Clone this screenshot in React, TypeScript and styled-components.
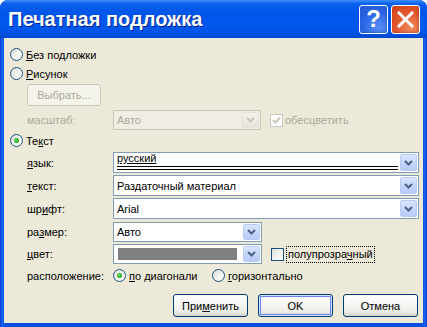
import styled, { createGlobalStyle } from 'styled-components';

const GlobalStyle = createGlobalStyle`
  html, body {
    margin: 0;
    padding: 0;
    background: #ffffff;
  }
  body {
    font-family: Tahoma, "Liberation Sans", Arial, sans-serif;
    font-size: 11px;
    color: #000000;
  }
`;

const Window = styled.div`
  width: 427px;
  height: 327px;
  display: flex;
  flex-direction: column;
  background: linear-gradient(90deg, #0831d9 0px, #166aee 2px, #0a4fe0 4px, #0a4fe0 423px, #166aee 425px, #0831d9 427px);
  border-radius: 8px 8px 0 0;
  overflow: hidden;
`;

const TitleBar = styled.div`
  height: 38px;
  flex: none;
  display: flex;
  align-items: center;
  padding: 0 7px 0 8px;
  background: linear-gradient(180deg, #3d8ef8 0px, #0a5fef 4px, #0055ea 14px, #0058ee 26px, #0052e2 34px, #0046cc 38px);
`;

const Title = styled.div`
  flex: 1;
  font-family: "Liberation Sans", Arial, sans-serif;
  font-weight: bold;
  font-size: 20px;
  color: #ffffff;
  text-shadow: 1px 1px 0 #0a1e8c;
  padding-top: 1px;
`;

const CaptionButton = styled.div<{ $kind: 'help' | 'close' }>`
  width: 29px;
  height: 29px;
  box-sizing: border-box;
  border: 1px solid #ffffff;
  border-radius: 3px;
  margin-left: 3px;
  display: flex;
  align-items: center;
  justify-content: center;
  background: ${(p) =>
    p.$kind === 'help'
      ? 'radial-gradient(circle at 70% 80%, #5a8ef6 0%, #2a66e4 55%, #2457d8 100%)'
      : 'radial-gradient(circle at 70% 80%, #f08a5c 0%, #e0552a 55%, #cc4218 100%)'};
  box-shadow: inset -1px -1px 2px rgba(0, 0, 0, 0.2);
  color: #ffffff;
  font-family: "Liberation Sans", Arial, sans-serif;
  font-weight: bold;
  font-size: 24px;
  line-height: 1;
`;

const Body = styled.div`
  flex: 1;
  margin: 0 4px 4px 4px;
  background: #ece9d8;
  display: flex;
  flex-direction: column;
  padding-top: 7px;
`;

const RadioRow = styled.div<{ $mt?: number }>`
  height: 19px;
  display: flex;
  align-items: center;
  gap: 3px;
  padding-left: 6px;
  margin-top: ${(p) => p.$mt ?? 0}px;
`;

const RadioCircle = styled.span<{ $checked?: boolean }>`
  width: 13px;
  height: 13px;
  box-sizing: border-box;
  border-radius: 50%;
  border: 1px solid #1c5180;
  background: linear-gradient(135deg, #dcdcd7 0%, #f4f4f0 60%, #ffffff 100%);
  display: flex;
  align-items: center;
  justify-content: center;
  flex: none;

  &::after {
    content: '';
    display: ${(p) => (p.$checked ? 'block' : 'none')};
    width: 5px;
    height: 5px;
    border-radius: 50%;
    background: radial-gradient(circle at 40% 40%, #6fe56b 0%, #2fb12b 50%, #1a8a18 100%);
  }
`;

const Mn = styled.span`
  text-decoration: underline;
`;

const FieldRow = styled.div<{ $h: number; $mt?: number }>`
  height: ${(p) => p.$h}px;
  margin-top: ${(p) => p.$mt ?? 0}px;
  display: grid;
  grid-template-columns: 86px auto auto 1fr;
  align-items: center;
  padding-left: 23px;
  padding-right: 5px;
`;

const Label = styled.div<{ $disabled?: boolean }>`
  color: ${(p) => (p.$disabled ? '#aca899' : '#000000')};
  white-space: nowrap;
`;

const Combo = styled.div<{ $w: number; $h: number; $disabled?: boolean }>`
  width: ${(p) => p.$w}px;
  height: ${(p) => p.$h}px;
  box-sizing: border-box;
  border: 1px solid ${(p) => (p.$disabled ? '#c9c7ba' : '#7f9db9')};
  background: ${(p) => (p.$disabled ? '#f0eee4' : '#ffffff')};
  color: ${(p) => (p.$disabled ? '#aca899' : '#000000')};
  display: flex;
  align-items: center;
  padding: 1px;
  gap: 2px;
`;

const ComboText = styled.div`
  flex: 1;
  padding-left: 2px;
  white-space: nowrap;
  overflow: hidden;
`;

const EditText = styled.div`
  flex: 1;
  align-self: flex-end;
  margin: 0 0 1px 2px;
  padding-bottom: 1px;
  border-bottom: 4px double #000000;
  line-height: 13px;
`;

const Swatch = styled.div`
  flex: 1;
  align-self: stretch;
  margin: 2px 4px 2px 3px;
  background: #808080;
`;

const ArrowButton = styled.div<{ $disabled?: boolean }>`
  width: 17px;
  align-self: stretch;
  box-sizing: border-box;
  border-radius: 2px;
  border: 1px solid ${(p) => (p.$disabled ? '#e6e4da' : '#b7cbf6')};
  background: ${(p) =>
    p.$disabled
      ? 'linear-gradient(180deg, #f3f2ec, #e6e4dc)'
      : 'linear-gradient(180deg, #dbe6fe 0%, #c6d7fc 50%, #b6cbf9 100%)'};
  display: flex;
  align-items: center;
  justify-content: center;
  flex: none;
`;

const CheckBox = styled.span<{ $disabled?: boolean }>`
  width: 13px;
  height: 13px;
  box-sizing: border-box;
  border: 1px solid ${(p) => (p.$disabled ? '#cac8bb' : '#1c5180')};
  background: ${(p) =>
    p.$disabled ? '#ffffff' : 'linear-gradient(135deg, #dcdcd7 0%, #f4f4f0 60%, #ffffff 100%)'};
  display: flex;
  align-items: center;
  justify-content: center;
  flex: none;
`;

const CheckWrap = styled.div<{ $disabled?: boolean }>`
  display: flex;
  align-items: center;
  gap: 2px;
  margin-left: 9px;
  color: ${(p) => (p.$disabled ? '#aca899' : '#000000')};
`;

const FocusText = styled.span`
  border: 1px dotted #000000;
  padding: 1px 1px 2px 1px;
`;

const OptionGroup = styled.div`
  display: flex;
  align-items: center;
`;

const Option = styled.div<{ $w?: number }>`
  display: flex;
  align-items: center;
  gap: 3px;
  width: ${(p) => (p.$w ? `${p.$w}px` : 'auto')};
`;

const PushButton = styled.div<{ $disabled?: boolean; $default?: boolean }>`
  width: ${(p) => (p.$disabled ? 74 : 75)}px;
  height: ${(p) => (p.$disabled ? 22 : 23)}px;
  box-sizing: border-box;
  border: 1px solid ${(p) => (p.$disabled ? '#c9c7ba' : '#003c74')};
  border-radius: 3px;
  display: flex;
  align-items: center;
  justify-content: center;
  color: ${(p) => (p.$disabled ? '#aca899' : '#000000')};
  background: ${(p) =>
    p.$disabled
      ? '#f5f4ea'
      : 'linear-gradient(180deg, #ffffff 0%, #f7f7f4 40%, #ecebe6 80%, #d6d0c5 100%)'};
  box-shadow: ${(p) => (p.$default ? 'inset 0 0 0 1px #cee7ff, inset 0 0 0 2px #6982ee' : 'none')};
`;

const ButtonRow = styled.div`
  display: flex;
  justify-content: flex-end;
  gap: 10px;
  padding-right: 5px;
  margin-top: 9px;
`;

const Indent = styled.div<{ $mt?: number }>`
  padding-left: 23px;
  margin-top: ${(p) => p.$mt ?? 0}px;
`;

function Chevron({ disabled }: { disabled?: boolean }) {
  return (
    <svg width="9" height="6" viewBox="0 0 9 6">
      <polyline
        points="1,1 4.5,4.5 8,1"
        fill="none"
        stroke={disabled ? '#c9c7ba' : '#4d6185'}
        strokeWidth="2"
      />
    </svg>
  );
}

function Check() {
  return (
    <svg width="9" height="9" viewBox="0 0 9 9">
      <polyline points="1,4 3.5,6.5 8,1.5" fill="none" stroke="#cac8bb" strokeWidth="2" />
    </svg>
  );
}

export default function App() {
  return (
    <>
      <GlobalStyle />
      <Window>
        <TitleBar>
          <Title>Печатная подложка</Title>
          <CaptionButton $kind="help">?</CaptionButton>
          <CaptionButton $kind="close">
            <svg width="17" height="17" viewBox="0 0 17 17">
              <path d="M2 2 L15 15 M15 2 L2 15" stroke="#ffffff" strokeWidth="3" strokeLinecap="square" />
            </svg>
          </CaptionButton>
        </TitleBar>
        <Body>
          <RadioRow>
            <RadioCircle />
            <span>
              <Mn>Б</Mn>ез подложки
            </span>
          </RadioRow>
          <RadioRow>
            <RadioCircle />
            <span>
              <Mn>Р</Mn>исунок
            </span>
          </RadioRow>
          <Indent $mt={1}>
            <PushButton $disabled>Выбрать...</PushButton>
          </Indent>
          <FieldRow $h={20} $mt={4}>
            <Label $disabled>масштаб:</Label>
            <Combo $w={148} $h={20} $disabled>
              <ComboText>Авто</ComboText>
              <ArrowButton $disabled>
                <Chevron disabled />
              </ArrowButton>
            </Combo>
            <CheckWrap $disabled>
              <CheckBox $disabled>
                <Check />
              </CheckBox>
              <span>обесцветить</span>
            </CheckWrap>
          </FieldRow>
          <RadioRow $mt={1}>
            <RadioCircle $checked />
            <span>
              Те<Mn>к</Mn>ст
            </span>
          </RadioRow>
          <FieldRow $h={21} $mt={2}>
            <Label>
              <Mn>я</Mn>зык:
            </Label>
            <Combo $w={306} $h={21}>
              <EditText>
                <Mn>русский</Mn>
              </EditText>
              <ArrowButton>
                <Chevron />
              </ArrowButton>
            </Combo>
          </FieldRow>
          <FieldRow $h={21} $mt={2}>
            <Label>
              <Mn>т</Mn>екст:
            </Label>
            <Combo $w={306} $h={21}>
              <ComboText>Раздаточный материал</ComboText>
              <ArrowButton>
                <Chevron />
              </ArrowButton>
            </Combo>
          </FieldRow>
          <FieldRow $h={21} $mt={2}>
            <Label>
              шр<Mn>и</Mn>фт:
            </Label>
            <Combo $w={306} $h={21}>
              <ComboText>Arial</ComboText>
              <ArrowButton>
                <Chevron />
              </ArrowButton>
            </Combo>
          </FieldRow>
          <FieldRow $h={20} $mt={3}>
            <Label>
              ра<Mn>з</Mn>мер:
            </Label>
            <Combo $w={149} $h={20}>
              <ComboText>Авто</ComboText>
              <ArrowButton>
                <Chevron />
              </ArrowButton>
            </Combo>
          </FieldRow>
          <FieldRow $h={20} $mt={2}>
            <Label>
              <Mn>ц</Mn>вет:
            </Label>
            <Combo $w={149} $h={20}>
              <Swatch />
              <ArrowButton>
                <Chevron />
              </ArrowButton>
            </Combo>
            <CheckWrap>
              <CheckBox />
              <FocusText>
                полупрозра<Mn>ч</Mn>ный
              </FocusText>
            </CheckWrap>
          </FieldRow>
          <FieldRow $h={19} $mt={2}>
            <Label>расположение:</Label>
            <OptionGroup>
              <Option $w={99}>
                <RadioCircle $checked />
                <span>
                  <Mn>п</Mn>о диагонали
                </span>
              </Option>
              <Option>
                <RadioCircle />
                <span>
                  <Mn>г</Mn>оризонтально
                </span>
              </Option>
            </OptionGroup>
          </FieldRow>
          <ButtonRow>
            <PushButton>
              <span>
                При<Mn>м</Mn>енить
              </span>
            </PushButton>
            <PushButton $default>OK</PushButton>
            <PushButton>Отмена</PushButton>
          </ButtonRow>
        </Body>
      </Window>
    </>
  );
}
